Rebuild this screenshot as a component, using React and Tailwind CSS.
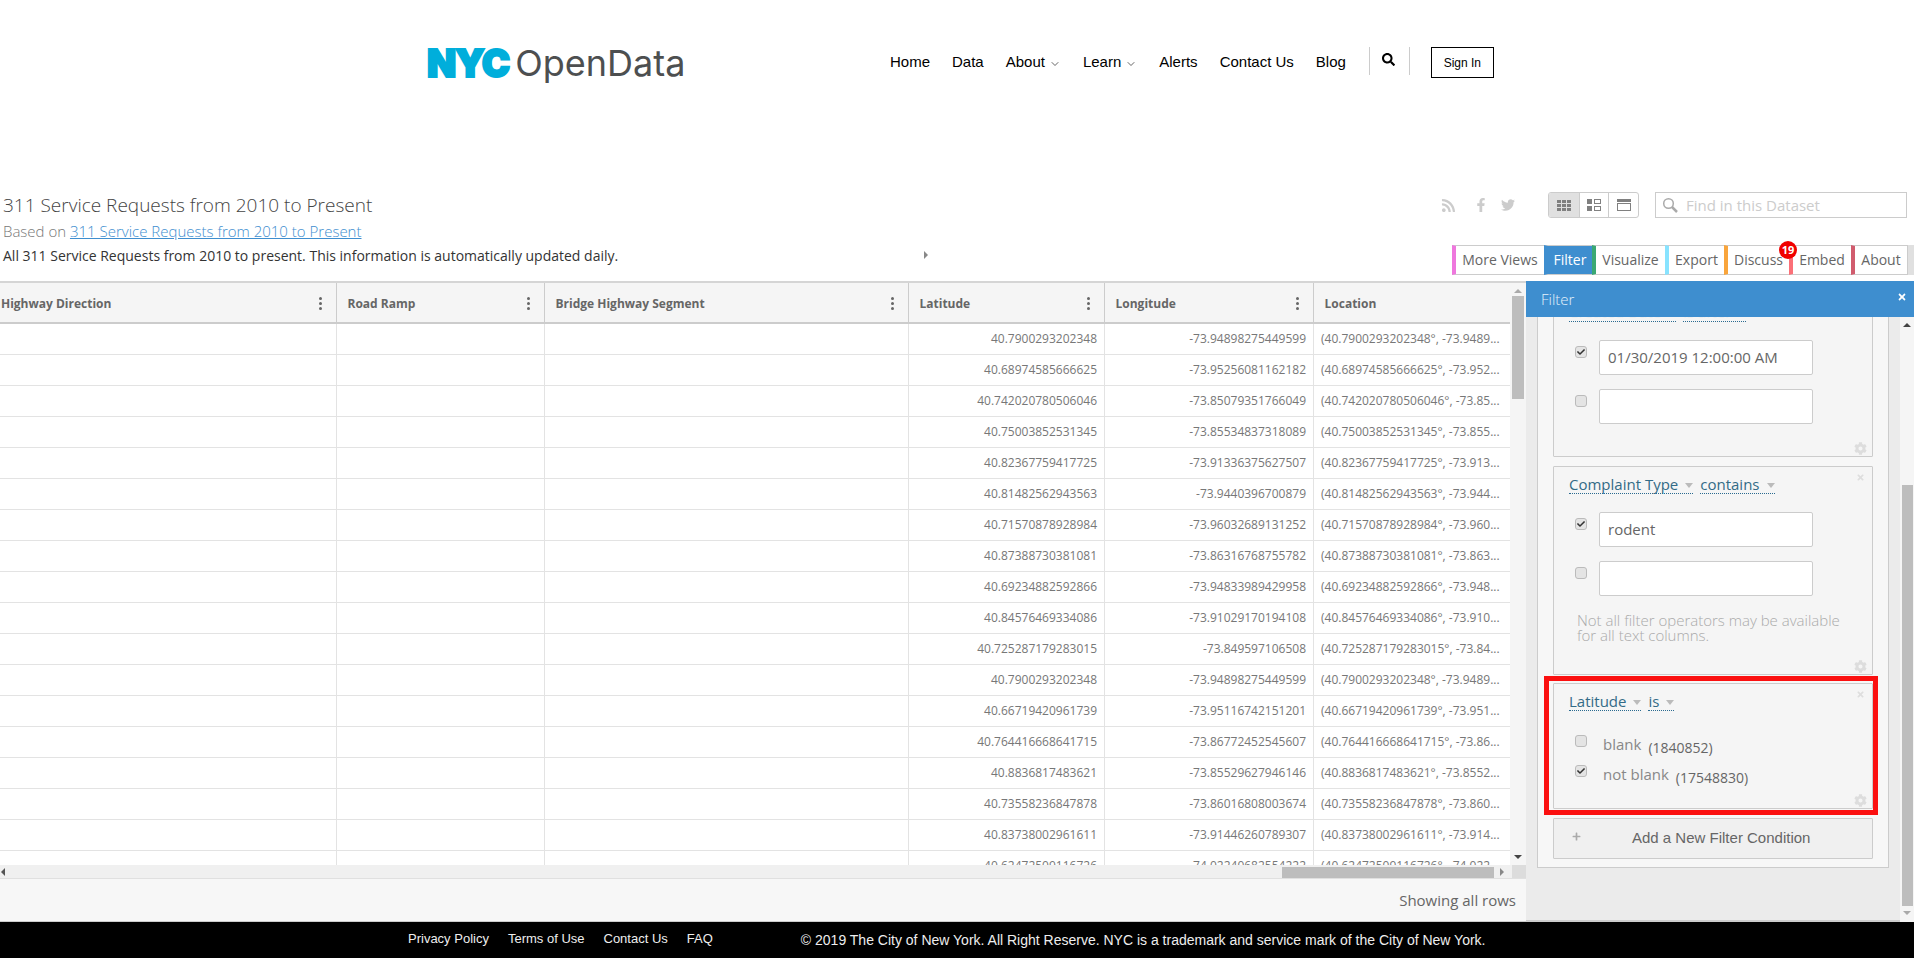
import { FaRss, FaFacebookF, FaTwitter, FaSearch, FaCheck, FaCog, FaTimes, FaPlus } from 'react-icons/fa';
import { ChevronDown } from 'lucide-react';

const rows = [
  ['40.7900293202348', '-73.94898275449599', '(40.7900293202348°, -73.9489...'],
  ['40.68974585666625', '-73.95256081162182', '(40.68974585666625°, -73.952...'],
  ['40.742020780506046', '-73.85079351766049', '(40.742020780506046°, -73.85...'],
  ['40.75003852531345', '-73.85534837318089', '(40.75003852531345°, -73.855...'],
  ['40.82367759417725', '-73.91336375627507', '(40.82367759417725°, -73.913...'],
  ['40.81482562943563', '-73.9440396700879', '(40.81482562943563°, -73.944...'],
  ['40.71570878928984', '-73.96032689131252', '(40.71570878928984°, -73.960...'],
  ['40.87388730381081', '-73.86316768755782', '(40.87388730381081°, -73.863...'],
  ['40.69234882592866', '-73.94833989429958', '(40.69234882592866°, -73.948...'],
  ['40.84576469334086', '-73.91029170194108', '(40.84576469334086°, -73.910...'],
  ['40.725287179283015', '-73.849597106508', '(40.725287179283015°, -73.84...'],
  ['40.7900293202348', '-73.94898275449599', '(40.7900293202348°, -73.9489...'],
  ['40.66719420961739', '-73.95116742151201', '(40.66719420961739°, -73.951...'],
  ['40.764416668641715', '-73.86772452545607', '(40.764416668641715°, -73.86...'],
  ['40.8836817483621', '-73.85529627946146', '(40.8836817483621°, -73.8552...'],
  ['40.73558236847878', '-73.86016808003674', '(40.73558236847878°, -73.860...'],
  ['40.83738002961611', '-73.91446260789307', '(40.83738002961611°, -73.914...'],
  ['40.62472509116726', '-74.02240682554222', '(40.62472509116726°, -74.022...'],
];

const tabs = [
  { label: 'More Views', cls: 'w-[92px] border-l-[#ee77dd] text-[#666]' },
  { label: 'Filter', cls: 'w-[48px] border-l-[#3e8ecf] bg-[#3e8ecf] text-white' },
  { label: 'Visualize', cls: 'w-[73px] border-l-[#3aa873] text-[#666]' },
  { label: 'Export', cls: 'w-[59px] border-l-[#88e3ff] text-[#666]' },
  { label: 'Discuss', cls: 'w-[65px] border-l-[#f9a53c] text-[#666]' },
  { label: 'Embed', cls: 'w-[62px] border-l-[#fb7078] text-[#666]' },
  { label: 'About', cls: 'w-[56px] border-l-[#d15c6e] text-[#666]' },
];

function Kebab() {
  return (
    <span className="flex flex-col gap-[2px]">
      <span className="h-[3px] w-[3px] rounded-full bg-[#666]" />
      <span className="h-[3px] w-[3px] rounded-full bg-[#666]" />
      <span className="h-[3px] w-[3px] rounded-full bg-[#666]" />
    </span>
  );
}

function HeadCell({ label, width, first, menu = true }) {
  return (
    <div className={`flex shrink-0 items-center justify-between pr-[14px] pt-[2px] ${width} ${first ? 'pl-[1px]' : 'border-l border-[#ccc] pl-[10.5px]'}`}>
      <span className="text-[12px] font-bold text-[#666]">{label}</span>
      {menu && <Kebab />}
    </div>
  );
}

function Check({ on }) {
  return (
    <span className="flex h-[12px] w-[12px] shrink-0 items-center justify-center rounded-[3px] border border-[#bbb] bg-[#e4e4e4]">
      {on && <FaCheck className="text-[8px] text-[#333]" />}
    </span>
  );
}

function Drop({ label, dim }) {
  return (
    <span className={`flex h-[19px] items-center gap-[7px] border-b border-dotted border-[#2a6a90] text-[15px] leading-[18px] ${dim ? 'text-[#eeeeee]' : 'text-[#336b87]'}`}>
      {label}
      <span className={`mt-[2px] h-0 w-0 border-x-[4.5px] border-t-[5px] border-x-transparent ${dim ? 'border-t-[#eeeeee]' : 'border-t-[#bbb]'}`} />
    </span>
  );
}

function CardMarks() {
  return (
    <>
      <FaTimes className="absolute right-[7px] top-[6px] text-[9px] text-[#dedede]" />
      <FaCog className="absolute bottom-[1px] right-[5px] text-[13px] text-[#ddd]" />
    </>
  );
}

function ValueRow({ on, value }) {
  return (
    <div className="flex items-start gap-[12px]">
      <span className="pt-[6px]"><Check on={on} /></span>
      <div className="flex h-[35px] w-[214px] items-center rounded-[2px] border border-[#ccc] bg-white pl-[8px] text-[15px] text-[#666]">{value}</div>
    </div>
  );
}

function ArrowUp({ color = 'border-b-[#aaa]' }) {
  return <span className={`block h-0 w-0 shrink-0 border-x-[4px] border-b-[4px] border-x-transparent ${color}`} />;
}

function ArrowDown({ color = 'border-t-[#444]' }) {
  return <span className={`block h-0 w-0 shrink-0 border-x-[4px] border-t-[4px] border-x-transparent ${color}`} />;
}

export default function App() {
  return (
    <div className="min-h-screen bg-white font-['Open_Sans',sans-serif]">
      {/* Header */}
      <header className="flex h-[190px] items-start pt-[47px] font-['Liberation_Sans',Arial,sans-serif]">
        <div className="ml-[427px] flex h-[32px] w-[256px] items-center">
          <span className="font-['Inter',sans-serif] text-[38px] font-black leading-none tracking-[-1px] text-[#00aedb] [-webkit-text-stroke:2px_#00aedb]">NYC</span>
          <span className="ml-[6px] font-['Inter',sans-serif] text-[36px] font-normal leading-none text-[#4d4f50]">OpenData</span>
        </div>
        <nav className="ml-[207px] flex h-[31px] items-center gap-[22px] text-[15px] text-black">
          <span>Home</span>
          <span>Data</span>
          <span className="flex items-center">About<ChevronDown className="ml-[4px] mt-[2px] h-[12px] w-[12px] text-[#333]" strokeWidth={1.5} /></span>
          <span className="flex items-center">Learn<ChevronDown className="ml-[4px] mt-[2px] h-[12px] w-[12px] text-[#333]" strokeWidth={1.5} /></span>
          <span>Alerts</span>
          <span>Contact Us</span>
          <span>Blog</span>
        </nav>
        <div className="ml-[23px] flex h-[28px] items-center border-x border-[#ccc] pb-[4px] pl-[12px] pr-[14px]">
          <FaSearch className="text-[13px] text-black" />
        </div>
        <button className="ml-[21px] h-[31px] w-[63px] border border-black text-[12px] text-black">Sign In</button>
      </header>

      {/* Title and toolbar */}
      <section className="flex h-[91px] justify-between">
        <div className="pl-[3px]">
          <h1 className="text-[19px] font-light leading-[30px] text-[#444]">311 Service Requests from 2010 to Present</h1>
          <p className="text-[15px] font-light leading-[22px] text-[#777]">
            Based on <span className="text-[#3e8ecf] underline">311 Service Requests from 2010 to Present</span>
          </p>
          <div className="mt-[2px] flex h-[22px] w-[925px] items-center justify-between">
            <p className="text-[14px] text-[#333]">All 311 Service Requests from 2010 to present. This information is automatically updated daily.</p>
            <span className="h-0 w-0 border-y-[4px] border-l-[4px] border-y-transparent border-l-[#888]" />
          </div>
        </div>
        <div className="flex flex-col items-end pt-[2px]">
          <div className="flex h-[26px] items-center pr-[7px]">
            <FaRss className="text-[15px] text-[#ccc]" />
            <FaFacebookF className="ml-[18px] text-[14px] text-[#ccc]" />
            <FaTwitter className="ml-[13px] text-[14px] text-[#ccc]" />
            <div className="ml-[33px] flex h-[26px] w-[91px] overflow-hidden rounded-[3px] border border-[#ccc]">
              <span className="flex w-[30px] items-center justify-center bg-[#e0e0e0]">
                <svg width="14" height="11" viewBox="0 0 14 11" fill="#808080">
                  <rect x="0" y="0" width="4" height="3" /><rect x="5" y="0" width="4" height="3" /><rect x="10" y="0" width="4" height="3" />
                  <rect x="0" y="4" width="4" height="3" /><rect x="5" y="4" width="4" height="3" /><rect x="10" y="4" width="4" height="3" />
                  <rect x="0" y="8" width="4" height="3" /><rect x="5" y="8" width="4" height="3" /><rect x="10" y="8" width="4" height="3" />
                </svg>
              </span>
              <span className="flex w-[30px] items-center justify-center border-l border-[#ccc]">
                <svg width="14" height="12" viewBox="0 0 14 12" fill="none" stroke="#808080">
                  <rect x="0" y="0" width="5" height="5" fill="#808080" stroke="none" /><rect x="0" y="7" width="5" height="5" fill="#808080" stroke="none" />
                  <rect x="7.5" y="0.5" width="6" height="4" /><rect x="7.5" y="7.5" width="6" height="4" />
                </svg>
              </span>
              <span className="flex w-[30px] items-center justify-center border-l border-[#ccc]">
                <svg width="14" height="12" viewBox="0 0 14 12" fill="none" stroke="#808080">
                  <rect x="0" y="0" width="14" height="3" fill="#808080" stroke="none" /><rect x="0.5" y="4.5" width="13" height="7" />
                </svg>
              </span>
            </div>
            <div className="ml-[16px] flex h-[26px] w-[252px] items-center border border-[#ccc] pl-[6px]">
              <svg width="16" height="16" viewBox="0 0 16 16" fill="none">
                <circle cx="6.5" cy="6.5" r="4.8" stroke="#aaa" strokeWidth="1.5" />
                <line x1="10" y1="10" x2="15" y2="15" stroke="#aaa" strokeWidth="2.5" />
              </svg>
              <span className="ml-[8px] text-[15px] text-[#ccc]">Find in this Dataset</span>
            </div>
          </div>
          <div className="mt-[27px] flex h-[30px]">
            {tabs.map((tab) => (
              <div key={tab.label} className={`relative flex items-center justify-center border-y border-l-4 border-y-[#ccc] pb-[2px] text-[14px] ${tab.cls}`}>
                {tab.label}
                {tab.label === 'Embed' && (
                  <span className="absolute -left-[14px] -top-[5px] flex h-[18px] w-[18px] items-center justify-center rounded-full bg-[#f00000] text-[11px] font-bold text-white">19</span>
                )}
              </div>
            ))}
            <div className="w-[7px] border-l border-[#ccc] bg-[#e0e0e0]" />
          </div>
        </div>
      </section>

      {/* Table and filter panel */}
      <main className="flex h-[641px]">
        <div className="flex w-[1526px] shrink-0 flex-col border-t-2 border-[#d5d5d5]">
          <div className="flex h-[582px]">
            <div className="flex w-[1510px] shrink-0 flex-col overflow-hidden">
              <div className="flex h-[41px] shrink-0 border-b-2 border-[#ccc] bg-[#f5f5f5]">
                <HeadCell first label="Highway Direction" width="w-[336px]" />
                <HeadCell label="Road Ramp" width="w-[208px]" />
                <HeadCell label="Bridge Highway Segment" width="w-[364px]" />
                <HeadCell label="Latitude" width="w-[196px]" />
                <HeadCell label="Longitude" width="w-[209px]" />
                <HeadCell label="Location" width="w-[197px]" menu={false} />
              </div>
              {rows.map((row, i) => (
                <div key={i} className="flex h-[31px] shrink-0 border-b border-[#e3e3e3] text-[12px] text-[#777]">
                  <div className="w-[336px] shrink-0" />
                  <div className="w-[208px] shrink-0 border-l border-[#e3e3e3]" />
                  <div className="w-[364px] shrink-0 border-l border-[#e3e3e3]" />
                  <div className="flex w-[196px] shrink-0 items-center justify-end border-l border-[#e3e3e3] pr-[7px]">{row[0]}</div>
                  <div className="flex w-[209px] shrink-0 items-center justify-end border-l border-[#e3e3e3] pr-[7px]">{row[1]}</div>
                  <div className="flex w-[197px] shrink-0 items-center border-l border-[#e3e3e3] pl-[7px]">{row[2]}</div>
                </div>
              ))}
            </div>
            <div className="flex w-[16px] shrink-0 flex-col items-center bg-[#f5f5f5] pt-[6px]">
              <ArrowUp />
              <div className="mt-[3px] h-[103px] w-[12px] shrink-0 bg-[#bdbdbd]" />
              <div className="flex-1" />
              <div className="flex pb-[6px]"><ArrowDown /></div>
            </div>
          </div>
          <div className="flex h-[13px] shrink-0 items-center bg-[#f0f0f0]">
            <span className="ml-[1px] h-0 w-0 border-y-[4px] border-r-[4px] border-y-transparent border-r-[#555]" />
            <div className="ml-[1277px] h-[11px] w-[212px] self-end bg-[#bdbdbd]" />
            <span className="ml-[6px] h-0 w-0 border-y-[4px] border-l-[4px] border-y-transparent border-l-[#888]" />
            <div className="ml-[8px] h-full flex-1 bg-[#dcdcdc]" />
          </div>
          <div className="flex h-[44px] shrink-0 items-center justify-end border-y border-b-[#ccc] border-t-[#e0e0e0] bg-[#f7f7f7] pr-[10px] text-[15px] text-[#666]">
            Showing all rows
          </div>
        </div>

        <aside className="flex w-[388px] shrink-0 flex-col">
          <div className="flex h-[36px] shrink-0 items-center justify-between bg-[#3e8ecf] pl-[15px] pr-[7px]">
            <span className="text-[15px] font-light text-[#e4f1fb]">Filter</span>
            <FaTimes className="mb-[4px] text-[10px] text-white" />
          </div>
          <div className="flex min-h-0 flex-1">
            <div className="w-[374px] overflow-hidden border-b-2 border-[#ccc] bg-[#ebebeb] px-[11px]">
              <div className="-mt-[32px] flex flex-col gap-[9px] border border-[#ccc] bg-[#f7f7f7] px-[15px] pb-[8px] pt-[8px]">
                <div className="relative h-[163px] rounded-[1px] border border-[#ccc] bg-[#f5f5f5] px-[15px] pt-[8px]">
                  <div className="flex gap-[7px]"><Drop dim label="Created Date" /><Drop dim label="is after" /></div>
                  <div className="ml-[6px] mt-[18px] flex flex-col gap-[14px]">
                    <ValueRow on value="01/30/2019 12:00:00 AM" />
                    <ValueRow />
                  </div>
                  <FaCog className="absolute bottom-[1px] right-[5px] text-[13px] text-[#ddd]" />
                </div>
                <div className="relative h-[209px] rounded-[1px] border border-[#ccc] bg-[#f5f5f5] px-[15px] pt-[8px]">
                  <div className="flex gap-[7px]"><Drop label="Complaint Type" /><Drop label="contains" /></div>
                  <div className="ml-[6px] mt-[18px] flex flex-col gap-[14px]">
                    <ValueRow on value="rodent" />
                    <ValueRow />
                  </div>
                  <p className="ml-[8px] mt-[17px] w-[270px] text-[15px] font-light leading-[15px] text-[#aaa]">Not all filter operators may be available for all text columns.</p>
                  <CardMarks />
                </div>
                <div className="relative -mt-[1px] h-[126px] rounded-[1px] border border-[#ccc] bg-[#f5f5f5] px-[15px] pt-[8px]">
                  <div className="pointer-events-none absolute -bottom-[7px] -left-[10px] -right-[6px] -top-[8px] border-[5px] border-[#fb1010]" />
                  <div className="flex gap-[7px]"><Drop label="Latitude" /><Drop label="is" /></div>
                  <div className="ml-[6px] mt-[23px] flex h-[20px] items-start">
                    <span className="pt-[1px]"><Check /></span>
                    <span className="ml-[16px] text-[15px] leading-[20px] text-[#888]">blank</span>
                    <span className="ml-[7px] mt-[4px] text-[14px] leading-[20px] text-[#666]">(1840852)</span>
                  </div>
                  <div className="ml-[6px] mt-[10px] flex h-[20px] items-start">
                    <span className="pt-[1px]"><Check on /></span>
                    <span className="ml-[16px] text-[15px] leading-[20px] text-[#888]">not blank</span>
                    <span className="ml-[7px] mt-[4px] text-[14px] leading-[20px] text-[#666]">(17548830)</span>
                  </div>
                  <CardMarks />
                </div>
                <div className="flex h-[41px] items-center rounded-[1px] border border-[#ccc] bg-[#f0f0f0] pl-[18px] font-['Liberation_Sans',Arial,sans-serif] text-[15px] text-[#666]">
                  <FaPlus className="mb-[4px] text-[9px] text-[#aaa]" />
                  <span className="ml-[51px]">Add a New Filter Condition</span>
                </div>
              </div>
            </div>
            <div className="flex w-[14px] flex-col items-center bg-[#f5f5f5] pt-[6px]">
              <ArrowUp color="border-b-[#444]" />
              <div className="mt-[158px] h-[421px] w-[11px] shrink-0 bg-[#bdbdbd]" />
              <div className="mt-[5px] flex"><ArrowDown color="border-t-[#aaa]" /></div>
            </div>
          </div>
        </aside>
      </main>

      {/* Footer */}
      <footer className="flex h-[36px] items-center bg-black pl-[408px] font-['Liberation_Sans',Arial,sans-serif] text-[#eee]">
        <div className="flex gap-[19px] pb-[2px] text-[13px]">
          <span>Privacy Policy</span>
          <span>Terms of Use</span>
          <span>Contact Us</span>
          <span>FAQ</span>
        </div>
        <span className="ml-[88px] text-[14px]">© 2019 The City of New York. All Right Reserve. NYC is a trademark and service mark of the City of New York.</span>
      </footer>
    </div>
  );
}
